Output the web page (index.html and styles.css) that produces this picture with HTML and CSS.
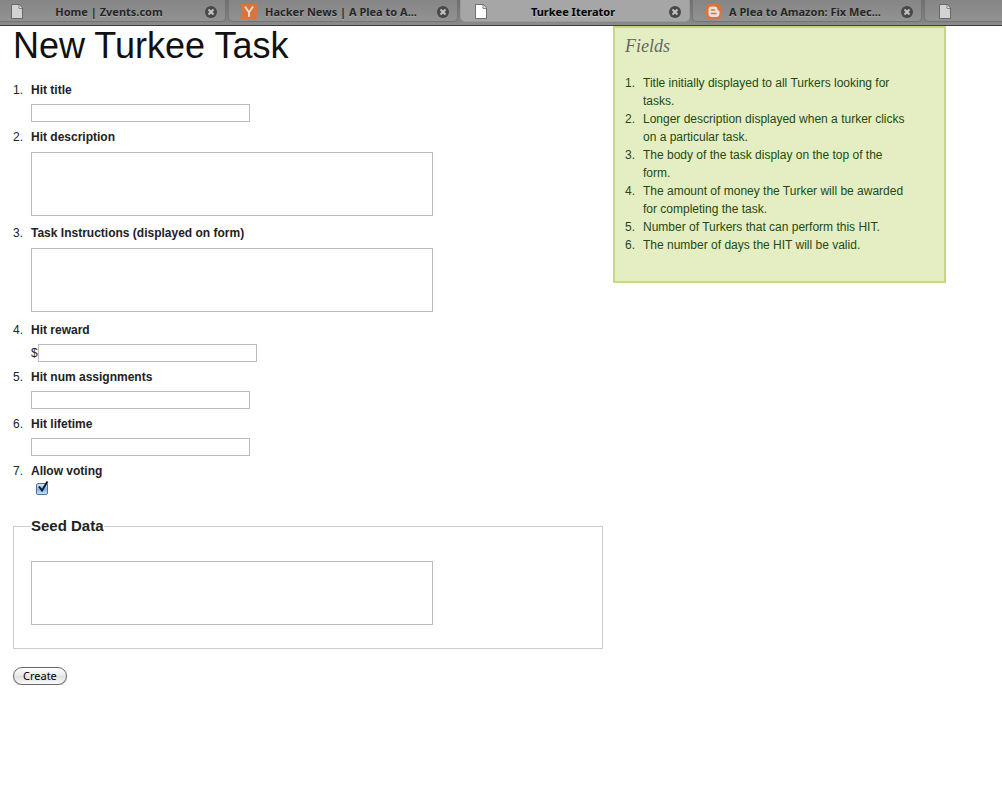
FILE: index.html
```html
<!DOCTYPE html>
<html lang="en">
<head>
<meta charset="utf-8">
<title>Turkee Iterator</title>
<link rel="stylesheet" href="styles.css">
</head>
<body>
<svg class="defs" aria-hidden="true">
  <symbol id="page" viewBox="0 0 17 17">
    <path d="M2.500 1.500h8l3 3.500v10.500h-11z" fill="currentColor" stroke="#555" stroke-opacity=".8"/>
    <path d="M10 2v3.500h3" fill="#ddd" stroke="#888"/>
  </symbol>
  <symbol id="close" viewBox="0 0 12 12">
    <circle cx="6" cy="6" r="6" fill="#484848"/>
    <path d="M3.500 3.500l5 5M8.500 3.500l-5 5" stroke="#c4c4c4" stroke-width="2"/>
  </symbol>
</svg>
<nav class="tabs" aria-label="Open tabs">
  <div class="tab">
    <svg class="tab-icon"><use href="#page"/></svg>
    <a class="tab-title" href="#">Home | Zvents.com</a>
    <button class="tab-close" type="button" aria-label="Close tab"><svg><use href="#close"/></svg></button>
  </div>
  <div class="tab">
    <svg class="tab-icon" viewBox="0 0 17 17"><path d="M0 1h16v15H0z" fill="#d9743c"/><path d="M4 3.500l4 6 4-6M8 9v5" fill="none" stroke="#e4e0dc" stroke-width="1.800"/></svg>
    <a class="tab-title" href="#">Hacker News | A Plea to A...</a>
    <button class="tab-close" type="button" aria-label="Close tab"><svg><use href="#close"/></svg></button>
  </div>
  <div class="tab tab-active">
    <svg class="tab-icon"><use href="#page"/></svg>
    <a class="tab-title" href="#" aria-current="page">Turkee Iterator</a>
    <button class="tab-close" type="button" aria-label="Close tab"><svg><use href="#close"/></svg></button>
  </div>
  <div class="tab">
    <svg class="tab-icon" viewBox="0 0 17 17"><rect x="1" y="1" width="15" height="15" rx="3" fill="#d9743c"/><path d="M6.500 3.500h3q3 0 3 3 0 1 1 1t1 1v2q0 3.500-3.500 3.500H6.500Q3.500 14 3.500 11V6.500q0-3 3-3z" fill="#e6e2de"/><path d="M6.500 7h3M6.500 10.500h4.500" stroke="#d9743c" stroke-width="1.500" stroke-linecap="round"/></svg>
    <a class="tab-title" href="#">A Plea to Amazon: Fix Mec...</a>
    <button class="tab-close" type="button" aria-label="Close tab"><svg><use href="#close"/></svg></button>
  </div>
  <div class="tab">
    <svg class="tab-icon"><use href="#page"/></svg>
  </div>
</nav>
<div class="page">
  <main>
    <h1>New Turkee Task</h1>
    <form>
      <ol class="fields">
        <li><label for="title">Hit title</label><input class="text" id="title" type="text"></li>
        <li><label for="description">Hit description</label><textarea id="description"></textarea></li>
        <li><label for="instructions">Task Instructions (displayed on form)</label><textarea id="instructions"></textarea></li>
        <li><label for="reward">Hit reward</label><div class="money"><span>$</span><input class="text" id="reward" type="text"></div></li>
        <li><label for="assignments">Hit num assignments</label><input class="text" id="assignments" type="text"></li>
        <li><label for="lifetime">Hit lifetime</label><input class="text" id="lifetime" type="text"></li>
        <li><label for="voting">Allow voting</label>
          <div class="check"><input id="voting" type="checkbox" checked><svg viewBox="0 0 14 15" aria-hidden="true"><path d="M3 6.500l3 4L11.500 1.500" fill="none" stroke="#10182c" stroke-width="2"/></svg></div></li>
      </ol>
      <fieldset>
        <legend>Seed Data</legend>
        <textarea aria-label="Seed Data"></textarea>
      </fieldset>
      <button class="create" type="submit">Create</button>
    </form>
  </main>
  <aside>
    <h2>Fields</h2>
    <ol class="help">
      <li>Title initially displayed to all Turkers looking for tasks.</li>
      <li>Longer description displayed when a turker clicks on a particular task.</li>
      <li>The body of the task display on the top of the form.</li>
      <li>The amount of money the Turker will be awarded for completing the task.</li>
      <li>Number of Turkers that can perform this HIT.</li>
      <li>The number of days the HIT will be valid.</li>
    </ol>
  </aside>
</div>
</body>
</html>
```
FILE: styles.css
```css
* { box-sizing: border-box; }
body {
  margin: 0;
  background: #fff;
  color: #222;
  font: 12px/18px "Liberation Sans", Arial, sans-serif;
}
.defs { display: none; }

.tabs {
  display: flex;
  gap: 2px;
  height: 26px;
  padding-bottom: 3px;
  overflow: hidden;
  background: linear-gradient(#6e6e6e, #858585 22px, #8e8e8e);
  border-bottom: 1px solid #3c3c3c;
}
.tab {
  display: flex;
  flex: 0 0 230px;
  align-items: center;
  height: 22px;
  padding: 2px 8px 0 12px;
  color: #d2d2d2;
  background: linear-gradient(#858585, #929292);
  border: 1px solid #747474;
  border-top: 0;
  border-radius: 0 0 5px 5px;
}
.tab:first-child { margin-left: -4px; }
.tab-active {
  color: #fff;
  background: #a6a6a6;
  border-color: #999;
}
.tab-icon { flex: none; width: 17px; height: 17px; }
.tab-title {
  flex: 1;
  padding: 1px 16px 0 3px;
  overflow: hidden;
  color: #262626;
  font: bold 11px/16px "Noto Sans", "Open Sans", sans-serif;
  text-align: center;
  text-decoration: none;
  text-shadow: 0 1px 0 #aaa;
  white-space: nowrap;
}
.tab-active .tab-title { color: #000; text-shadow: 0 1px 0 #c4c4c4; }
.tab-close {
  flex: none;
  width: 12px;
  height: 12px;
  padding: 0;
  background: none;
  border: 0;
}
.tab-close svg { display: block; width: 12px; height: 12px; }

.page {
  display: grid;
  grid-template-columns: 590fr 333fr;
  gap: 10px;
  align-items: start;
  padding: 0 56px 0 13px;
}
h1 {
  margin: 0 0 15px;
  color: #111;
  font-size: 36px;
  font-weight: normal;
  line-height: 40px;
}
ol {
  margin: 0;
  padding: 0;
  list-style: none;
  counter-reset: item;
}
li {
  position: relative;
  padding-left: 18px;
  counter-increment: item;
}
li::before {
  position: absolute;
  left: 0;
  content: counter(item) ".";
}
.fields { display: grid; gap: 6px; }
.fields label { display: block; font-weight: bold; }
input.text {
  display: block;
  width: 219px;
  height: 18px;
  margin-top: 5px;
  padding: 0 2px;
  font: inherit;
  background: #fff;
  border: 1px solid #bbb;
}
textarea {
  display: block;
  width: 402px;
  max-width: 100%;
  height: 64px;
  margin: 6px 0 2px;
  padding: 4px;
  font: inherit;
  background: #fff;
  border: 1px solid #bbb;
  resize: none;
}
#instructions { margin-bottom: 3px; }
.money { display: flex; align-items: center; margin-top: 5px; }
.money input.text { margin: 0; }
.check {
  position: relative;
  height: 15px;
  padding: 3px 0 0 5px;
}
.check input {
  display: block;
  width: 12px;
  height: 12px;
  margin: 0;
  appearance: none;
  background: linear-gradient(#d5e6f8, #7fb5ea 55%, #b5edff);
  border: 1px solid #5c6c94;
  border-radius: 2px;
}
.check svg {
  position: absolute;
  top: 0;
  left: 5px;
  width: 14px;
  height: 15px;
  pointer-events: none;
}

fieldset {
  margin: 22px 0 18px;
  padding: 20px 17px 21px;
  border: 1px solid #ccc;
}
legend { padding: 0; font-size: 15px; font-weight: bold; }
.create {
  display: block;
  height: 18px;
  padding: 0 9px;
  color: #000;
  font: 11px/16px "Noto Sans", "Open Sans", sans-serif;
  background: linear-gradient(#fff, #e9e9e9 50%, #e0e0e0 51%, #fafafa);
  border: 1px solid #666;
  border-radius: 9px;
  box-shadow: 0 1px 1px #bbb;
}

aside {
  padding: 8px 32px 27px 10px;
  color: #234a13;
  background: #e5eec2;
  border: 2px solid #c6d880;
}
h2 {
  margin: 0 0 18px;
  color: #666;
  font: italic 18px/20px "Liberation Serif", "Times New Roman", serif;
}
```
